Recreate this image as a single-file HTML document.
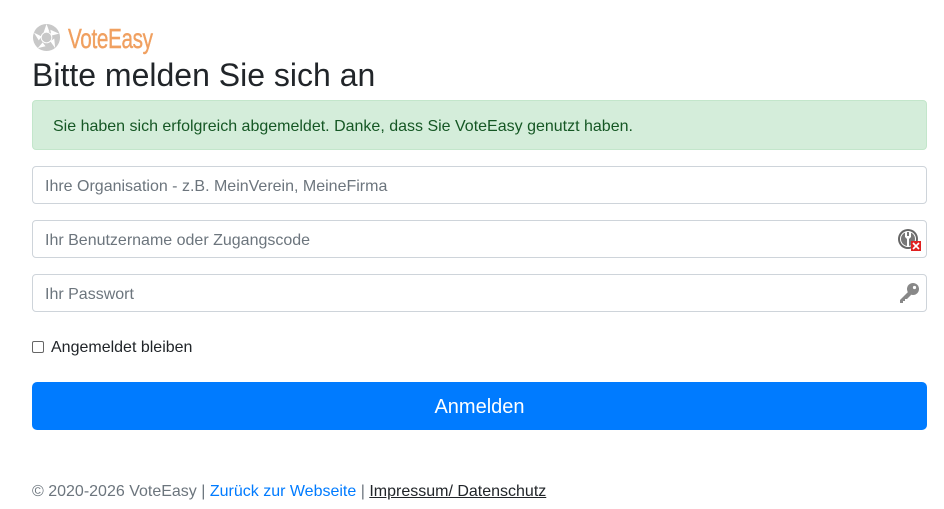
<!DOCTYPE html>
<html><head><meta charset="utf-8"><style>
body{margin:0;background:#fff;font-family:"Liberation Sans",sans-serif;color:#212529;width:944px;height:509px;overflow:hidden;position:relative}
.abs{position:absolute}
.logo{left:32px;top:21px;display:flex;align-items:center}
.logo span{font-family:"Liberation Sans Narrow","Liberation Sans",sans-serif;font-size:28px;color:#f0a060;margin-left:7px;letter-spacing:-0.5px;transform:scaleX(.74);transform-origin:left;display:inline-block;-webkit-text-stroke:0.4px #f0a060;position:relative;top:2px}
h1{position:absolute;left:32px;top:57px;margin:0;font-size:32px;font-weight:400;color:#212529}
.alert{left:32px;top:100px;height:50px;background:#d4edda;border:1px solid #c3e6cb;border-radius:4px;color:#155724;font-size:16px;line-height:52px;box-sizing:border-box;width:895px;padding-left:20px}
.inp{left:32px;width:895px;height:38px;border:1px solid #ced4da;border-radius:4px;box-sizing:border-box;color:#6c757d;font-size:16px;line-height:39px;padding-left:12px}
.btn{left:32px;top:382px;width:895px;height:48px;background:#007bff;border-radius:5px;color:#fff;font-size:20px;text-align:center;line-height:50px}
.foot{left:32px;top:483px;font-size:16px;color:#6c757d}
.foot a{color:#007bff;text-decoration:none}
.foot a.u{color:#212529;text-decoration:underline}
</style></head><body>
<div class="abs logo"><svg width="29" height="29" viewBox="0 0 30 30"><circle cx="15" cy="15" r="14" fill="#c8c8c8"/><g fill="#fff"><circle cx="15" cy="15" r="6"/><path d="M15 1 L18 9 L12 10Z"/><path d="M28 11 L20 13 L19 7Z"/><path d="M24 26 L19 19 L23 16Z"/><path d="M6 26 L11 20 L14 24Z"/><path d="M2 10 L10 14 L7 18Z"/></g><circle cx="15" cy="15" r="5" fill="#c8c8c8"/></svg><span>VoteEasy</span></div>
<h1>Bitte melden Sie sich an</h1>
<div class="abs alert">Sie haben sich erfolgreich abgemeldet. Danke, dass Sie VoteEasy genutzt haben.</div>
<div class="abs inp" style="top:166px">Ihre Organisation - z.B. MeinVerein, MeineFirma</div>
<div class="abs inp" style="top:220px">Ihr Benutzername oder Zugangscode</div>
<svg class="abs" style="left:897px;top:228px" width="26" height="24" viewBox="0 0 26 24"><circle cx="11" cy="11" r="10" fill="#666"/><circle cx="11" cy="11" r="8" fill="#fff"/><circle cx="11" cy="11" r="7" fill="#777"/><path d="M8 4 L8 9 L10 11 L10 19 L12 19 L12 11 L14 9 L14 4 L12 4 L12 8 L10 8 L10 4Z" fill="#fff"/><rect x="14" y="13" width="10" height="10" fill="#e02020"/><path d="M16 15 L22 21 M22 15 L16 21" stroke="#fff" stroke-width="1.6"/></svg>
<div class="abs inp" style="top:274px">Ihr Passwort</div>
<svg class="abs" style="left:898px;top:282px" width="22" height="22" viewBox="0 0 22 22"><circle cx="15" cy="7" r="6" fill="#888"/><circle cx="16.5" cy="5.5" r="1.6" fill="#fff"/><path d="M11 9 L2 18 L2 21 L5 21 L5 19 L7 19 L7 17 L9 17 L13 13Z" fill="#888"/></svg>
<div class="abs" style="left:32px;top:341px;width:12px;height:12px;border:1px solid #666;border-radius:2px;box-sizing:border-box"></div>
<div class="abs" style="left:51px;top:339px;font-size:16px">Angemeldet bleiben</div>
<div class="abs btn">Anmelden</div>
<div class="abs foot">© 2020-2026 VoteEasy | <a href="#">Zurück zur Webseite</a> | <a class="u" href="#">Impressum/ Datenschutz</a></div>
</body></html>
